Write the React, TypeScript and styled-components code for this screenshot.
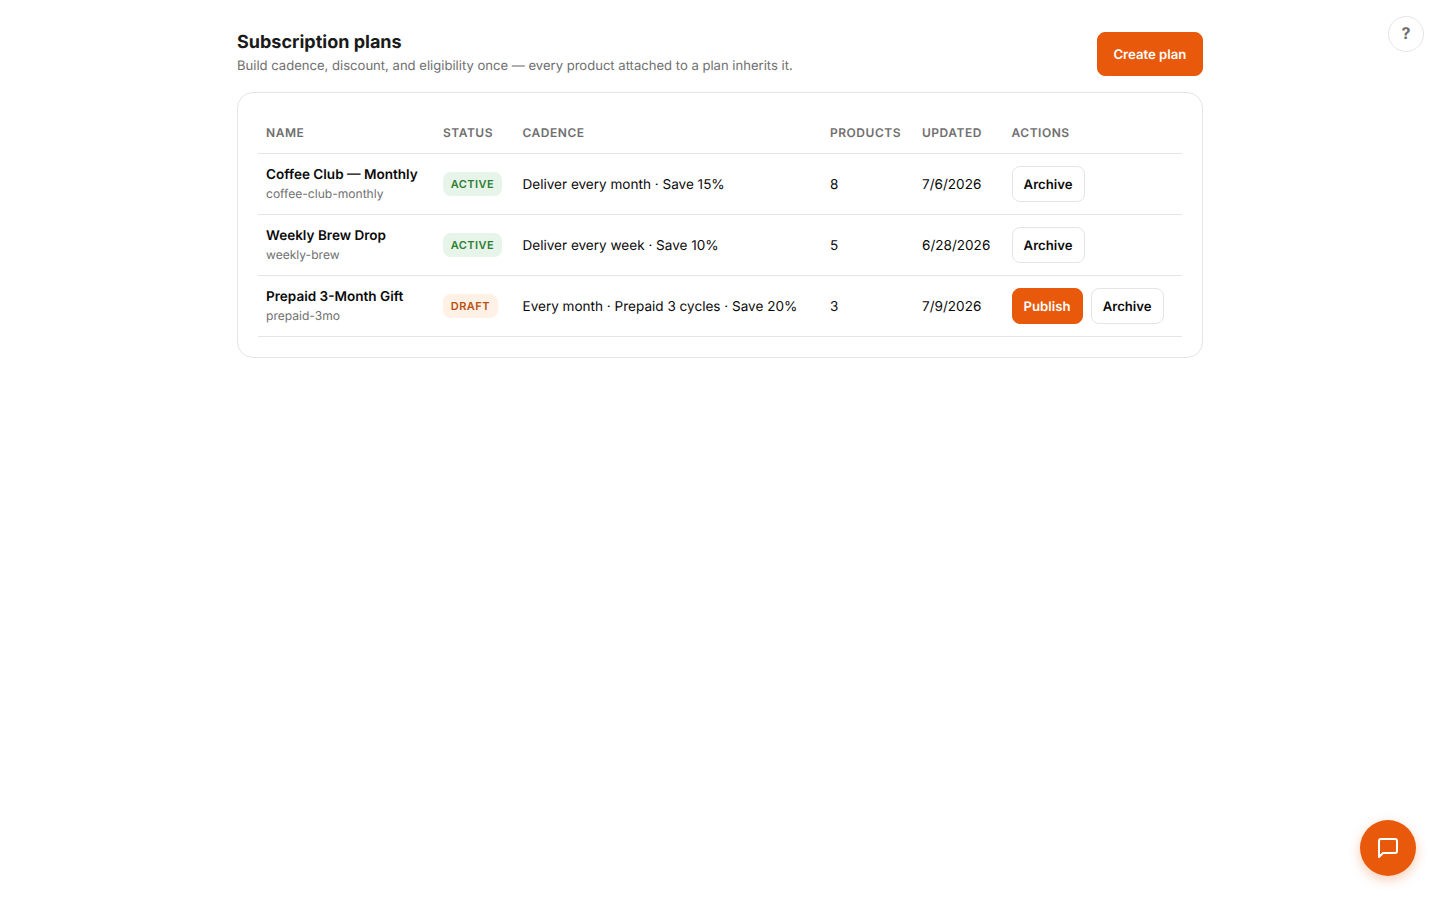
import React from 'react';
import styled, { createGlobalStyle, css } from 'styled-components';

const GlobalStyle = createGlobalStyle`
  *, *::before, *::after { box-sizing: border-box; }
  body { margin: 0; background: #fff; color: #1a1a1a; font-family: Inter, 'Liberation Sans', sans-serif; font-size: 14px; line-height: 20px; text-rendering: geometricPrecision; }
  button { font-family: inherit; cursor: pointer; text-rendering: inherit; }
  h1, p { margin: 0; }
`;

const Page = styled.main`
  width: 966px;
  margin: 0 auto;
  padding-top: 32px;
`;

const Header = styled.header`
  display: flex;
  justify-content: space-between;
  align-items: flex-start;
  height: 44px;
  margin-bottom: 16px;
`;

const Title = styled.h1`
  font-size: 18px;
  font-weight: 700;
  line-height: 22px;
`;

const Subtitle = styled.p`
  margin-top: 2px;
  font-size: 13.07px;
  line-height: 20px;
  color: #6f6f6f;
`;

const Button = styled.button<{ $primary?: boolean; $large?: boolean }>`
  height: ${(p) => (p.$large ? 44 : 36)}px;
  padding: 2px ${(p) => (p.$large ? 15.7 : 11.1)}px 0;
  border: 1px solid #e5e5e5;
  border-radius: 8px;
  background: #fff;
  color: #0a0a0a;
  font-size: 13.15px;
  font-weight: 600;
  ${(p) => p.$primary && css`
    background: #e8590c;
    border-color: #e8590c;
    color: #fff;
  `}
`;

const Card = styled.section`
  border: 1px solid #e5e5e5;
  border-radius: 16px;
  padding: 20px;
`;

const Table = styled.table`
  width: 100%;
  table-layout: fixed;
  border-collapse: collapse;
`;

const HeadCell = styled.th`
  height: 40px;
  padding: 0 8px;
  text-align: left;
  font-size: 12px;
  font-weight: 600;
  letter-spacing: 0.52px;
  color: #6f6f6f;
  border-bottom: 1px solid #e5e5e5;
`;

const Cell = styled.td<{ $lowered?: boolean }>`
  height: 61px;
  padding: ${(p) => (p.$lowered ? '2px 8px 0' : '0 8px')};
  vertical-align: middle;
  white-space: nowrap;
  font-size: 13.56px;
  color: #0a0a0a;
  border-bottom: 1px solid #e5e5e5;
`;

const PlanName = styled.div`
  padding-top: 1px;
  font-weight: 600;
`;

const Slug = styled.div`
  padding-bottom: 2px;
  font-size: 12.07px;
  line-height: 17px;
  color: #6f6f6f;
`;

const Badge = styled.span<{ $draft: boolean }>`
  display: inline-flex;
  align-items: center;
  height: 24px;
  padding: 0 7.8px;
  border-radius: 8px;
  font-size: 11px;
  font-weight: 600;
  letter-spacing: 0.44px;
  vertical-align: middle;
  background: ${(p) => (p.$draft ? '#fff1e6' : '#e6f4ea')};
  color: ${(p) => (p.$draft ? '#b8500f' : '#2e7d32')};
`;

const Actions = styled.div`
  display: flex;
  gap: 8px;
`;

const HelpButton = styled.button`
  position: fixed;
  top: 16px;
  right: 16px;
  width: 36px;
  height: 36px;
  padding: 0 0 2px;
  border: 1px solid #e5e5e5;
  border-radius: 50%;
  background: #fff;
  color: #6b6b6b;
  font-size: 16px;
  font-weight: 700;
`;

const ChatButton = styled.button`
  position: fixed;
  right: 24px;
  bottom: 24px;
  width: 56px;
  height: 56px;
  display: flex;
  align-items: center;
  justify-content: center;
  padding: 0;
  border: 0;
  border-radius: 50%;
  background: #e8590c;
  color: #fff;
  box-shadow: 0 4px 12px rgba(232, 89, 12, 0.3);
`;

const plans = [
  { name: 'Coffee Club — Monthly', slug: 'coffee-club-monthly', status: 'ACTIVE', cadence: 'Deliver every month · Save 15%', products: 8, updated: '7/6/2026' },
  { name: 'Weekly Brew Drop', slug: 'weekly-brew', status: 'ACTIVE', cadence: 'Deliver every week · Save 10%', products: 5, updated: '6/28/2026' },
  { name: 'Prepaid 3-Month Gift', slug: 'prepaid-3mo', status: 'DRAFT', cadence: 'Every month · Prepaid 3 cycles · Save 20%', products: 3, updated: '7/9/2026' },
];

const columns = [
  { label: 'NAME', width: 177 },
  { label: 'STATUS', width: 79.5 },
  { label: 'CADENCE', width: 307.5 },
  { label: 'PRODUCTS', width: 92 },
  { label: 'UPDATED', width: 89.5 },
  { label: 'ACTIONS', width: 178.5 },
];

const ChatIcon = () => (
  <svg width="24" height="24" viewBox="0 0 24 24" fill="none" stroke="currentColor" strokeWidth="2" strokeLinecap="round" strokeLinejoin="round">
    <path d="M21 15a2 2 0 0 1-2 2H7l-4 4V5a2 2 0 0 1 2-2h14a2 2 0 0 1 2 2z" />
  </svg>
);

export default function App() {
  return (
    <>
      <GlobalStyle />
      <Page>
        <Header>
          <div>
            <Title>Subscription plans</Title>
            <Subtitle>Build cadence, discount, and eligibility once — every product attached to a plan inherits it.</Subtitle>
          </div>
          <Button $primary $large>Create plan</Button>
        </Header>
        <Card>
          <Table>
            <colgroup>{columns.map((c) => <col key={c.label} width={c.width} />)}</colgroup>
            <thead>
              <tr>{columns.map((c) => <HeadCell key={c.label}>{c.label}</HeadCell>)}</tr>
            </thead>
            <tbody>
              {plans.map((p) => (
                <tr key={p.slug}>
                  <Cell><PlanName>{p.name}</PlanName><Slug>{p.slug}</Slug></Cell>
                  <Cell><Badge $draft={p.status === 'DRAFT'}>{p.status}</Badge></Cell>
                  <Cell $lowered>{p.cadence}</Cell>
                  <Cell $lowered>{p.products}</Cell>
                  <Cell $lowered>{p.updated}</Cell>
                  <Cell>
                    <Actions>
                      {p.status === 'DRAFT' && <Button $primary>Publish</Button>}
                      <Button>Archive</Button>
                    </Actions>
                  </Cell>
                </tr>
              ))}
            </tbody>
          </Table>
        </Card>
      </Page>
      <HelpButton aria-label="Help">?</HelpButton>
      <ChatButton aria-label="Open chat"><ChatIcon /></ChatButton>
    </>
  );
}
